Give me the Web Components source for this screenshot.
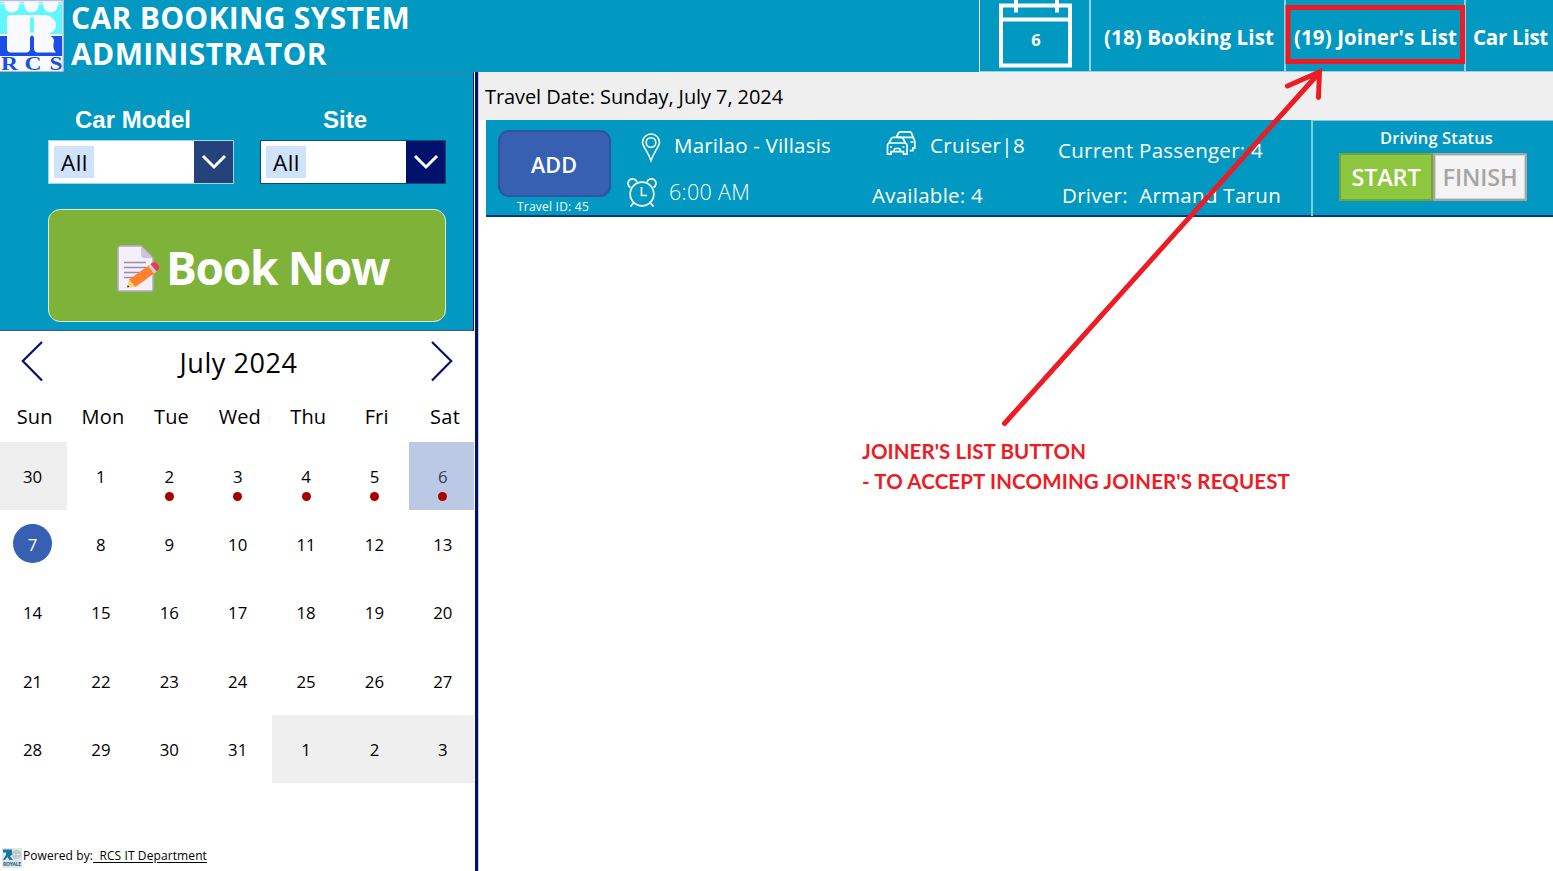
<!DOCTYPE html>
<html lang="en">
<head>
<meta charset="UTF-8">
<title>Car Booking System</title>
<style>
  body {
    margin: 0;
    width: 1553px;
    height: 871px;
    overflow: hidden;
    background: #fff;
    color: #000;
    font-family: "Open Sans", "Noto Sans", sans-serif;
  }
</style>
</head>
<body>
<booking-app></booking-app>

<script>
// one line of text, spaced out to the width given in w
class FitText extends HTMLElement {
  constructor() {
    super();
    this.attachShadow({ mode: "open" });
    this.shadowRoot.innerHTML = /*html*/`
      <style>
        :host { display: block; width: max-content; flex: none; }
        span { display: block; width: max-content; white-space: pre; }
      </style>
      <span><slot></slot></span>
    `;
  }

  connectedCallback() {
    const w = Number(this.getAttribute("w"));
    if (!w) return;
    const span = this.shadowRoot.querySelector("span");
    const count = this.textContent.length;
    const natural = span.getBoundingClientRect().width;
    span.style.letterSpacing = (w - natural) / count + "px";
  }
}
customElements.define("fit-text", FitText);

class RcsLogo extends HTMLElement {
  constructor() {
    super();
    this.attachShadow({ mode: "open" });
    this.shadowRoot.innerHTML = /*html*/`
      <style>
        :host { display: block; width: 64px; height: 72px; }
        svg { display: block; }
      </style>
      <svg width="64" height="72" viewBox="0 0 64 72">
        <rect width="63.5" height="71.5" fill="#f8faff"/>
        <rect width="63.5" height="1.2" fill="#b9bbd8"/>
        <rect x="62.4" width="1.2" height="71.5" fill="#b9bbd8"/>
        <rect y="2" width="62" height="32.500" fill="#62f7ff"/>
        <rect y="36" width="62" height="20" fill="#194fe6"/>
        <g fill="#f8faff">
          <path d="M4.500 2h15q0 10.500-7.500 10.500T4.500 2zM24 2h15q0 10.500-7.500 10.500T24 2zM43 2h15q0 10.500-7.500 10.500T43 2z"/>
          <rect x="0" y="3.200" width="62" height="1"/>
          <rect x="7" y="15" width="23" height="37.500" rx="4"/>
          <rect x="26" y="15" width="12" height="24"/>
          <path d="M34 15h10c7 0 12 5 12 10s-5 9.500-13 10c7 0 11 2 11 6-1 5-1 8 2 11.500H38q-4 0-4-4z"/>
        </g>
        <rect x="0" y="34.200" width="62" height="1.500" fill="#f8faff"/>
        <rect x="30" y="17" width="4" height="16" rx="2" fill="#62f7ff"/>
        <path d="M29.500 52.500q.5-1 .5-3V38q0-2.500 2-2.500t2 2.500v11.500q0 2 1 3z" fill="#194fe6"/>
        <g font-family="Liberation Serif, serif" font-weight="700" font-size="19" fill="#194fe6">
          <text x="1" y="69.500" textLength="17" lengthAdjust="spacingAndGlyphs">R</text>
          <text x="24.500" y="69.500" textLength="17" lengthAdjust="spacingAndGlyphs">C</text>
          <text x="49.500" y="69.500" textLength="13" lengthAdjust="spacingAndGlyphs">S</text>
        </g>
      </svg>
    `;
  }
}
customElements.define("rcs-logo", RcsLogo);

class AppHeader extends HTMLElement {
  constructor() {
    super();
    this.attachShadow({ mode: "open" });
    this.shadowRoot.innerHTML = /*html*/`
      <style>
        :host {
          display: flex;
          height: 72px;
          background: #0198c1;
          color: #fff;
          font-weight: 700;
        }
        .title {
          flex: 1;
          padding: 0 0 0 7px;
          font-size: 30px;
          line-height: 36px;
        }
        .tab {
          box-sizing: border-box;
          height: 72px;
          border-left: 2px solid #93d2e5;
          border-bottom: 1px solid #93d2e5;
          font-size: 20.500px;
          line-height: 75px;
        }
        .date {
          width: 110px;
          border-left: 1px solid #fff;
          display: grid;
        }
        .date > * { grid-area: 1 / 1; }
        .date fit-text { justify-self: center; font-size: 16.500px; line-height: 80px; margin-left: 3px; }
        svg { display: block; }
      </style>
      <rcs-logo></rcs-logo>
      <div class="title">
        <fit-text w="339">CAR BOOKING SYSTEM</fit-text>
        <fit-text w="256">ADMINISTRATOR</fit-text>
      </div>
      <div class="tab date">
        <svg width="108" height="71" fill="none" stroke="#fff" stroke-width="4">
          <path d="M21 5.500h69v60H21zM21 19.500h69M36 0v12.500M77 0v12.500"/>
        </svg>
        <fit-text>6</fit-text>
      </div>
      <div class="tab" style="width:195px"><fit-text w="170" style="margin-left:13px">(18) Booking List</fit-text></div>
      <div class="tab" style="width:180px"><fit-text w="163" style="margin-left:8px">(19) Joiner's List</fit-text></div>
      <div class="tab" style="width:89px"><fit-text w="75" style="margin-left:7px">Car List</fit-text></div>
    `;
  }
}
customElements.define("app-header", AppHeader);

class ComboBox extends HTMLElement {
  constructor() {
    super();
    this.attachShadow({ mode: "open" });
    this.shadowRoot.innerHTML = /*html*/`
      <style>
        :host {
          display: flex;
          flex-direction: column;
          align-items: center;
          width: 186px;
        }
        .label {
          margin-right: 16px;
          font: 700 24px/40px "Liberation Sans", Arial, sans-serif;
          color: #fff;
        }
        .box {
          display: flex;
          box-sizing: border-box;
          width: 100%;
          height: 44px;
          border: 1px solid var(--edge, #9fd6e8);
          background: #fff;
        }
        .value {
          box-sizing: border-box;
          width: 40px;
          height: 32px;
          margin: 5px auto 0 5px;
          padding-left: 7px;
          background: #cfe3fb;
          color: #000;
          font-size: 22.500px;
          line-height: 33px;
        }
        .arrow { width: 39px; background: var(--arrow, #26427b); }
      </style>
      <div class="label"><slot name="label"></slot></div>
      <div class="box">
        <div class="value"><slot></slot></div>
        <div class="arrow">
          <svg width="39" height="42" fill="none" stroke="#fff" stroke-width="3"><path d="M9 15l11 11 11-11"/></svg>
        </div>
      </div>
    `;
  }
}
customElements.define("combo-box", ComboBox);

class BookingPanel extends HTMLElement {
  constructor() {
    super();
    this.attachShadow({ mode: "open" });
    this.shadowRoot.innerHTML = /*html*/`
      <style>
        :host {
          display: block;
          box-sizing: border-box;
          width: 474px;
          height: 259px;
          padding: 27px 27px 0 48px;
          background: #0198c1;
          border-top: 1px solid #3d7fae;
          border-right: 1px solid #00126b;
          border-bottom: 1px solid #3b5596;
        }
        .filters { display: flex; justify-content: space-between; }
        combo-box + combo-box { --edge: #0a4a73; --arrow: #00126b; }
        .book {
          display: flex;
          box-sizing: border-box;
          width: 398px;
          height: 113px;
          margin-top: 25px;
          padding: 0 0 0 67px;
          border: 1.500px solid #e3f3d0;
          border-radius: 12px;
          background: #7fb239;
          color: #fff;
          font-size: 46px;
          font-weight: 700;
          line-height: 114px;
        }
        .book svg { flex: none; margin: 35px 4px 0 0; }
      </style>
      <div class="filters">
        <combo-box><fit-text slot="label">Car Model</fit-text><fit-text w="27">All</fit-text></combo-box>
        <combo-box><fit-text slot="label">Site</fit-text><fit-text w="27">All</fit-text></combo-box>
      </div>
      <div class="book">
        <svg width="46" height="48" viewBox="0 0 46 48">
          <path d="M4 1h21l12 12v31.500q0 1.500-1.500 1.500h-32q-1.500 0-1.500-1.500V3q0-2 2-2z" fill="#f4effa" stroke="#b4abc2" stroke-width="1.500"/>
          <path d="M25 1l12 12h-9q-3 0-3-3z" fill="#cdc4d6"/>
          <path d="M8 17.500h22M8 22.500h22M8 27.500h17M8 32.500h11" stroke="#998ea6" stroke-width="1.600"/>
          <path d="M11 42.500l2.500-8.500L20 41.800z" fill="#fdd376"/>
          <path d="M11 42.500l.8-2.500 1.600 2z" fill="#3a302c"/>
          <path d="M13.200 34.500L33 20.300l6 7.500L19.500 42z" fill="#ff822d"/>
          <path d="M32 21l3-2.300 6 7.500-3 2.300z" fill="#d3d3d3"/>
          <path d="M34.500 19l1.800-1.300q3-1.500 5.200 1.200 2.800 3.500.8 5.800l-2 1.500z" fill="#f8315f"/>
        </svg>
        <fit-text w="223">Book Now</fit-text>
      </div>
    `;
  }
}
customElements.define("booking-panel", BookingPanel);

class MonthCalendar extends HTMLElement {
  constructor() {
    super();
    this.attachShadow({ mode: "open" });
    this.shadowRoot.innerHTML = /*html*/`
      <style>
        :host { display: block; height: 510px; width: 474px; overflow: hidden; }
        .bar {
          display: flex;
          justify-content: space-between;
          height: 62px;
          padding: 0 21px 0 21px;
          font-size: 27px;
          line-height: 63px;
        }
        .bar svg { margin-top: 9px; }
        .days {
          display: grid;
          grid-template-columns: repeat(7, 68.4px);
          text-align: center;
        }
        .week { height: 48.500px; padding-left: .5px; font-size: 20px; line-height: 47px; }
        .week fit-text { justify-self: center; }
        .grid { margin-left: -1.700px; grid-auto-rows: 68.4px; font-size: 16.800px; line-height: 70px; }
        .cell { display: grid; justify-items: center; }
        .cell > * { grid-area: 1 / 1; }
        .off { background: #efefef; }
        .now { background: #bcc9e5; color: #333c4d; }
        .picked { color: #fff; }
        .disc { width: 39px; height: 39px; margin: 14.500px 1px 0 0; border-radius: 50%; background: #3860b2; }
        .dot { width: 9px; height: 9px; margin-top: 50px; border-radius: 50%; background: #a80000; }
      </style>
      <div class="bar">
        <svg width="22" height="42" fill="none" stroke="#00126b" stroke-width="2.200"><path d="M21 2L1.800 21 21 40.500"/></svg>
        <fit-text w="118" style="margin-left:3px">July 2024</fit-text>
        <svg width="22" height="42" fill="none" stroke="#00126b" stroke-width="2.200"><path d="M1 2l19.200 19L1 40.500"/></svg>
      </div>
      <div class="days week"></div>
      <div class="days grid"></div>
    `;
  }

  connectedCallback() {
    const week = this.shadowRoot.querySelector(".week");
    const grid = this.shadowRoot.querySelector(".grid");
    const names = { Sun: 36, Mon: 43, Tue: 35, Wed: 42, Thu: 36, Fri: 24, Sat: 30 };
    for (const name in names) {
      week.innerHTML += `<fit-text w="${names[name]}">${name}</fit-text>`;
    }

    // June 30 to August 3
    for (let i = 0; i < 35; i++) {
      const day = i === 0 ? 30 : i > 31 ? i - 31 : i;
      let cls = "cell";
      let mark = "";
      if (i === 0 || i > 31) cls += " off";
      if (i === 6) cls += " now";
      if (i >= 2 && i <= 6) mark = `<i class="dot"></i>`;
      if (i === 7) {
        cls += " picked";
        mark = `<i class="disc"></i>`;
      }
      grid.innerHTML += `<div class="${cls}">${mark}<span>${day}</span></div>`;
    }
  }
}
customElements.define("month-calendar", MonthCalendar);

class PoweredBy extends HTMLElement {
  constructor() {
    super();
    this.attachShadow({ mode: "open" });
    this.shadowRoot.innerHTML = /*html*/`
      <style>
        :host { display: flex; height: 30px; padding-left: 2px; font-size: 12px; line-height: 30px; }
        svg { flex: none; margin: 7px 1px 0 0; }
        u { text-underline-offset: 2px; }
      </style>
      <svg width="20" height="20">
        <rect width="20" height="20" fill="#dfe7ec"/>
        <path d="M1 1.500h9v5.500L8 8l3 4H7.500L5.500 9 3 12H1l3-5V4.500H1z" fill="#14789f"/>
        <circle cx="14.500" cy="6.500" r="4" fill="none" stroke="#a5bcbc"/>
        <path d="M11 5h7M11 8h7M14 3v7" stroke="#9db9a4" stroke-width=".8"/>
        <text x="1" y="17.800" font-size="5" font-weight="700" font-family="Open Sans, sans-serif" fill="#245a77" textLength="18">ROYALE</text>
      </svg>
      <fit-text w="70">Powered by:</fit-text>
      <u><fit-text w="114">  RCS IT Department</fit-text></u>
    `;
  }
}
customElements.define("powered-by", PoweredBy);

class TravelCard extends HTMLElement {
  constructor() {
    super();
    this.attachShadow({ mode: "open" });
    this.shadowRoot.innerHTML = /*html*/`
      <style>
        :host {
          display: grid;
          grid-template-columns: 136px 240px 186px 263px 1fr;
          box-sizing: border-box;
          height: 97px;
          margin-left: 7px;
          background: #0198c1;
          border-bottom: 2px solid #00377f;
          color: #fff;
          font-size: 20.500px;
          line-height: 41px;
        }
        .line { display: flex; height: 40px; }
        .add {
          display: flex;
          justify-content: center;
          box-sizing: border-box;
          width: 113px;
          height: 67px;
          margin: 10px 0 0 11.500px;
          border: 2px solid #30539f;
          border-radius: 11px;
          background: #3860b2;
          font-size: 21.500px;
          font-weight: 600;
          line-height: 65px;
        }
        .id { margin: 0 0 0 31px; font-size: 12px; line-height: 19px; }
        .status {
          display: flex;
          flex-direction: column;
          align-items: center;
          border-left: 2px solid #7fcbe0;
          border-top: 1px solid #7fcbe0;
          font-size: 16.500px;
          font-weight: 600;
        }
        .status > fit-text { height: 32px; line-height: 34px; margin-left: 7px; }
        .toggle { display: flex; font-size: 23.500px; line-height: 45px; }
        .toggle div {
          display: flex;
          justify-content: center;
          box-sizing: border-box;
          width: 94px;
          height: 48px;
          border: 2px solid #74a338;
          background: #8dc63f;
        }
        .toggle .off { border-color: #a6a6a6; background: #f4f4f4; color: #a6a6a6; box-shadow: inset 0 0 0 1px #d2d2d2; }
        svg { display: block; flex: none; fill: none; stroke: #fff; }
      </style>
      <div>
        <div class="add"><fit-text w="46">ADD</fit-text></div>
        <fit-text class="id" w="72">Travel ID: 45</fit-text>
      </div>
      <div>
        <div class="line" style="padding:5px 0 0 19px;height:35px">
          <svg width="20" height="40" stroke-width="1.600"><path d="M10 35.500C7 27 1.500 21 1.500 17.500a8.500 8.500 0 0 1 17 0C18.500 21 13 27 10 35.500z"/><circle cx="10" cy="17.500" r="4.800"/></svg>
          <fit-text w="157" style="margin-left:13px">Marilao - Villasis</fit-text>
        </div>
        <div class="line" style="padding:12px 0 0 5px">
          <svg width="30" height="40" stroke-width="1.700"><circle cx="15" cy="22" r="11.800"/><path d="M14.500 15v8.500H20M3.500 15.500A4.600 4.600 0 1 1 10 10M20 10A4.600 4.600 0 1 1 26.500 15.500M6.500 31L3.500 34.500M23.500 31l3 3.500"/></svg>
          <fit-text w="81" style="margin-left:12px;font-size:21.500px;font-weight:300;line-height:40px">6:00 AM</fit-text>
        </div>
      </div>
      <div>
        <div class="line" style="padding:5px 0 0 24px">
          <svg width="30" height="40" stroke-width="1.700">
            <path d="M10.500 12l2-4q.7-1.200 2-1.200h9q1.400 0 2 1.300l2.500 6.200q.8 1 .8 2.500v6.400h-2v2.500h-3M12 12.300h15M27.500 17h-3"/>
            <path d="M1.500 20.500q0-1.500 1.500-2.500l2.300-4.500q.6-1.200 2-1.200h7.800q1.400 0 2 1.200l2.300 4.500q1.600 1 1.600 2.500v8.700h-3.500v-2.500H5v2.500H1.500zM3 18h16.500M4 22h2M16.500 22h2M8 26.500q0-3 1.500-3h3.500q1.500 0 1.500 3"/>
          </svg>
          <fit-text w="95" style="margin-left:14px">Cruiser|8</fit-text>
        </div>
        <fit-text w="111" style="margin:10px 0 0 10px">Available: 4</fit-text>
      </div>
      <div style="padding-top:10px">
        <fit-text w="205" style="margin:0 0 0 10px">Current Passenger: 4</fit-text>
        <fit-text w="219" style="margin:4px 0 0 14px">Driver:  Armand Tarun</fit-text>
      </div>
      <div class="status">
        <fit-text w="113">Driving Status</fit-text>
        <div class="toggle">
          <div><fit-text w="69">START</fit-text></div>
          <div class="off"><fit-text w="75">FINISH</fit-text></div>
        </div>
      </div>
    `;
  }
}
customElements.define("travel-card", TravelCard);

// red callout on top of the page
class CalloutLayer extends HTMLElement {
  constructor() {
    super();
    this.attachShadow({ mode: "open" });
    this.shadowRoot.innerHTML = /*html*/`
      <style>
        :host { position: absolute; inset: 0; pointer-events: none; color: #ed1c24; }
        svg { position: absolute; left: 0; top: 0; fill: none; stroke: #ed1c24; stroke-linecap: round; }
        .note {
          position: absolute;
          left: 862px;
          top: 436px;
          font: 700 20.500px/30px Lato, sans-serif;
        }
      </style>
      <svg width="1553" height="871">
        <rect x="1288" y="7.500" width="174.500" height="54" stroke-width="5"/>
        <path d="M1004.500 423.500L1319 73M1287.500 86L1319.500 72 1318.500 97.500" stroke-width="5"/>
      </svg>
      <div class="note">
        <fit-text w="224">JOINER'S LIST BUTTON</fit-text>
        <fit-text w="428">- TO ACCEPT INCOMING JOINER'S REQUEST</fit-text>
      </div>
    `;
  }
}
customElements.define("callout-layer", CalloutLayer);

class BookingApp extends HTMLElement {
  constructor() {
    super();
    this.attachShadow({ mode: "open" });
    this.shadowRoot.innerHTML = /*html*/`
      <style>
        :host { display: block; position: relative; width: 1553px; height: 871px; }
        .body { display: flex; height: 799px; }
        .side { width: 475px; }
        .rule { width: 3px; background: #00126b; border-right: 1px solid #c5cbe0; }
        .main { flex: 1; }
        .date {
          height: 48px;
          padding-left: 6px;
          background: #efefef;
          font-size: 20px;
          line-height: 50px;
        }
      </style>
      <app-header></app-header>
      <div class="body">
        <div class="side">
          <booking-panel></booking-panel>
          <month-calendar></month-calendar>
          <powered-by></powered-by>
        </div>
        <div class="rule"></div>
        <div class="main">
          <div class="date"><fit-text w="298">Travel Date: Sunday, July 7, 2024</fit-text></div>
          <travel-card></travel-card>
        </div>
      </div>
      <callout-layer></callout-layer>
    `;
  }
}
customElements.define("booking-app", BookingApp);
</script>
</body>
</html>
